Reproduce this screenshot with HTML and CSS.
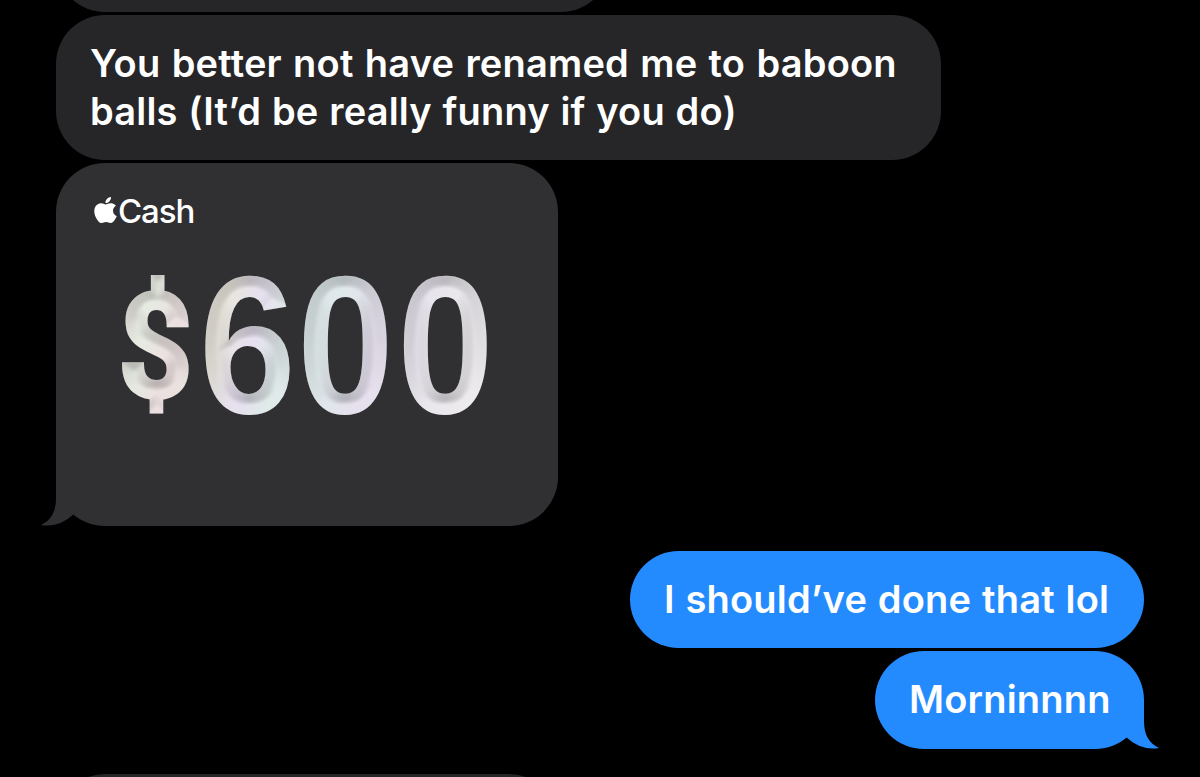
FILE: index.html
```
<!DOCTYPE html>
<html lang="en">
<head>
    <meta charset="UTF-8">
    <meta name="viewport" content="width=device-width, initial-scale=1.0">
    <title>Messages</title>
    <link rel="stylesheet" href="styles.css">
</head>
<body>
    <div class="chat">
        <div class="bubble received previous"></div>
        <div class="bubble received">
            <span class="line">You better not have renamed me to baboon</span>
            <span class="line second">balls (It’d be really funny if you do)</span>
        </div>
        <div class="bubble cash">
            <div class="cash-logo">
                <svg class="apple" viewBox="2 0 20 24" preserveAspectRatio="none">
                    <path d="M12.15 6.9c-.95 0-2.42-1.08-3.96-1.04-2.04.03-3.91 1.18-4.96 3.01-2.12 3.68-.55 9.1 1.52 12.1 1.01 1.45 2.21 3.09 3.79 3.04 1.52-.07 2.09-.99 3.93-.99 1.83 0 2.35.99 3.96.95 1.64-.03 2.68-1.48 3.68-2.95 1.16-1.69 1.64-3.32 1.66-3.41-.04-.01-3.18-1.22-3.22-4.86-.03-3.04 2.48-4.49 2.6-4.56-1.43-2.09-3.62-2.32-4.39-2.38-2-.16-3.68 1.09-4.61 1.09zM15.53 3.83c.84-1.01 1.4-2.43 1.25-3.83-1.21.05-2.66.81-3.53 1.82-.78.9-1.46 2.34-1.27 3.71 1.34.1 2.71-.69 3.55-1.7z"/>
                </svg>
                <span>Cash</span>
            </div>
            <svg class="amount" viewBox="0 0 400 240">
                <defs>
                    <linearGradient id="sheen" gradientUnits="userSpaceOnUse" x1="0" y1="40" x2="400" y2="140">
                        <stop offset="0" stop-color="#f0e2e0"/>
                        <stop offset=".12" stop-color="#e6ebe2"/>
                        <stop offset=".2" stop-color="#ecdfe0"/>
                        <stop offset=".3" stop-color="#e8e6dc"/>
                        <stop offset=".38" stop-color="#e6e0ef"/>
                        <stop offset=".46" stop-color="#dfeae9"/>
                        <stop offset=".56" stop-color="#dfe8ea"/>
                        <stop offset=".68" stop-color="#e6e0ee"/>
                        <stop offset=".82" stop-color="#e9e6ec"/>
                        <stop offset="1" stop-color="#f0eeef"/>
                    </linearGradient>
                    <!-- stacked insets give the height map for the V-shaped groove -->
                    <filter id="groove" filterUnits="userSpaceOnUse" x="0" y="0" width="400" height="240" color-interpolation-filters="sRGB">
                        <feMorphology in="SourceAlpha" operator="erode" radius="3" result="e1"/>
                        <feMorphology in="SourceAlpha" operator="erode" radius="6" result="e2"/>
                        <feMorphology in="SourceAlpha" operator="erode" radius="9" result="e3"/>
                        <feComposite in="SourceAlpha" in2="e1" operator="arithmetic" k2=".25" k3=".25" result="h1"/>
                        <feComposite in="e2" in2="e3" operator="arithmetic" k2=".25" k3=".25" result="h2"/>
                        <feComposite in="h1" in2="h2" operator="arithmetic" k2="1" k3="1"/>
                        <feGaussianBlur stdDeviation="1.9" result="height"/>
                        <feDiffuseLighting in="height" surfaceScale="-1.5" diffuseConstant="1.1" lighting-color="#fff" result="light">
                            <feDistantLight azimuth="260" elevation="60"/>
                        </feDiffuseLighting>
                        <feBlend in="SourceGraphic" in2="light" mode="multiply" result="lit"/>
                        <feComposite in="lit" in2="SourceAlpha" operator="in"/>
                    </filter>
                </defs>
                <g class="digits" filter="url(#groove)" fill="url(#sheen)">
                    <text class="dollar" x="12" y="167" textLength="75" lengthAdjust="spacingAndGlyphs">$</text>
                    <text x="93" y="183" textLength="97" lengthAdjust="spacingAndGlyphs">6</text>
                    <text x="191" y="183" textLength="97" lengthAdjust="spacingAndGlyphs">0</text>
                    <text x="291" y="183" textLength="97" lengthAdjust="spacingAndGlyphs">0</text>
                </g>
            </svg>
            <svg class="tail" viewBox="0 0 36 48">
                <path d="M15 0V20C15 34 10 42 0 47Q18 50 33 36V0Z"/>
            </svg>
        </div>
        <div class="bubble sent">I should’ve done that lol</div>
        <div class="bubble sent last">
            Morninnnn
            <svg class="tail" viewBox="0 0 36 48">
                <path d="M15 0V20C15 34 10 42 0 47Q18 50 33 36V0Z"/>
            </svg>
        </div>
        <div class="bubble received next"></div>
    </div>
</body>
</html>
```
FILE: styles.css
```
body {
    margin: 0;
    background-color: #000;
    color: #fff;
    font-family: Inter, sans-serif;
}
.chat {
    display: flex;
    flex-direction: column;
    align-items: flex-start;
    height: 777px;
    padding: 0 56px;
    box-sizing: border-box;
    overflow: hidden;
}
.bubble {
    position: relative;
    flex-shrink: 0;
    box-sizing: border-box;
    border-radius: 49px;
    font-size: 38px;
    font-weight: 600;
    letter-spacing: 0.2px;
    word-spacing: 1.5px;
    white-space: nowrap;
}
.received {
    width: 885px;
    height: 145px;
    padding: 25px 34px;
    background-color: #262629;
}
.line {
    display: block;
    line-height: 47px;
}
.second {
    line-height: 49px;
    word-spacing: 0.9px;
}
.previous {
    width: 554px;
    height: 98px;
    margin: -86px 0 3px;
}
.cash {
    width: 502px;
    height: 363px;
    margin-top: 3px;
    background-color: #303032;
}
.cash-logo {
    display: flex;
    align-items: center;
    height: 30px;
    padding: 33px 0 0 38px;
    font-size: 33px;
    font-weight: 500;
    letter-spacing: -1.1px;
}
.apple {
    width: 23px;
    height: 26px;
    margin: -3px 1px 0 0;
    fill: #fff;
}
.amount {
    display: block;
    width: 400px;
    height: 240px;
    margin: 4px 0 0 50px;
}
.digits {
    font-family: "Liberation Sans", sans-serif;
    font-size: 197px;
    font-weight: 700;
}
.dollar {
    font-family: Roboto, sans-serif;
    font-size: 145px;
    stroke: url(#sheen);
    stroke-width: 4px;
}
.tail {
    position: absolute;
    left: -15px;
    bottom: 0;
    width: 36px;
    height: 48px;
    fill: #303032;
}
.sent {
    align-self: flex-end;
    width: 514px;
    height: 97.4px;
    margin-top: 25px;
    padding-left: 34px;
    background-color: #248bff;
    line-height: 97px;
    word-spacing: 1px;
}
.last {
    width: 269px;
    margin-top: 3px;
}
.last .tail {
    left: auto;
    right: -15px;
    transform: scaleX(-1);
    fill: #248bff;
}
.next {
    width: 502px;
    margin-top: 25px;
}
```
